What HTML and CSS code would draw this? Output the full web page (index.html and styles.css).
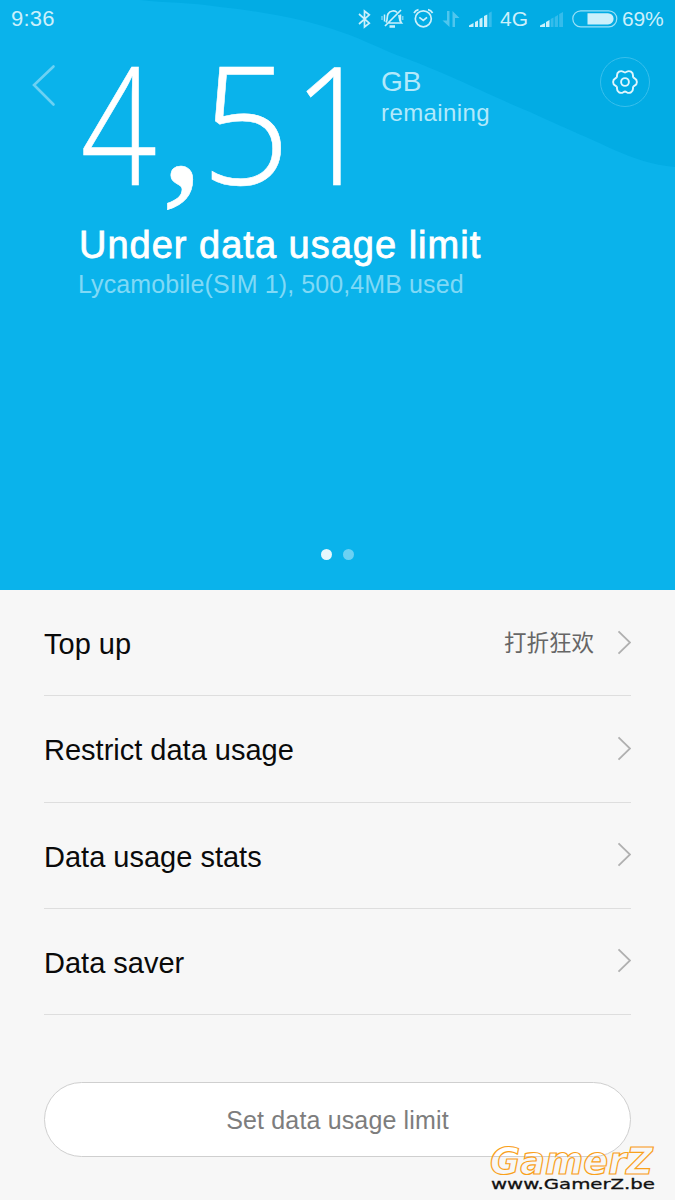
FILE: index.html
```html
<!DOCTYPE html>
<html lang="en">
  <head>
    <meta charset="UTF-8" />
    <meta name="viewport" content="width=device-width, initial-scale=1.0" />
    <title>Data usage</title>
    <link rel="stylesheet" href="styles.css">
  </head>
  <body>
    <header class="hero">
      <svg class="wave" width="675" height="170" viewBox="0 0 675 170">
        <path d="M140 0C165 3 190 2 220 7C260 11 308 20 341 32C365 40 382 50 405 58C460 79 495 98 530 112C575 133 592 139 612 149C635 159 652 165 675 167V0Z" />
      </svg>
      <div class="status">
        <time>9:36</time>
        <svg class="status-icons" width="146" height="30" viewBox="357 4 146 30">
          <g fill="none" stroke="#ccf0fb" stroke-width="1.7">
            <path d="M359 14L369.300 23.200L364.500 27V11L369.300 14.800L359 24" />
            <path d="M386 22.500C388 20 386.500 17 388 14C390 10.500 395 10 397 12.500M399 15C399.500 19 399 20 401.500 23H388M385 26L401 10" />
            <path d="M389.500 26.500H395" stroke-width="2.500" />
            <path d="M384.500 14.500V21.500M400.500 14.500V21.500" stroke-width="1.500" />
            <path d="M382 16V20M402.800 16V20" stroke-width="1.200" opacity=".7" />
            <circle cx="423.300" cy="18.800" r="8" />
            <path d="M419.300 17.300L423.300 20.500L427 17.300M414 13Q415.500 10.200 418.500 9.700M432.600 13Q431 10.200 428 9.700" />
          </g>
          <path d="M449.500 11V27L442.500 20.500H447V11ZM452.500 27V11L459.500 18H455V27Z" fill="#4fc6ee" />
          <path d="M469 27V25.500L473.500 23V27ZM475 27V22L478 20.500V27ZM479.500 27V19L482.500 17.500V27ZM484 27V16L487.300 14.500V27Z" fill="#ccf0fb" />
          <path d="M488.700 27V13L491.700 11.500V27Z" fill="#35bceb" />
        </svg>
        <span class="network">4G</span>
        <svg class="signal" width="24" height="17" viewBox="0 0 24 17">
          <path d="M0 16V14.500L5 12V16ZM6 16V11L9.500 9V16Z" fill="#ccf0fb" />
          <path d="M10.700 16V8L13.500 6.500V16ZM14.700 16V6L18 4V16ZM19.200 16V3L23 1V16Z" fill="#35bceb" />
        </svg>
        <svg class="battery" width="46" height="18" viewBox="0 0 46 18">
          <rect x=".8" y=".8" width="44" height="16" rx="8" fill="none" stroke="#99e0f7" stroke-width="1.200" />
          <path d="M15.500 3.200H36A5.600 5.600 0 0 1 36 14.400H15.500Z" fill="#ccf0fb" />
        </svg>
        <span class="percent">69%</span>
      </div>

      <div class="usage">
        <svg class="back" width="30" height="44" viewBox="0 0 30 44">
          <path d="M23.500 3.500L4 22L23.500 41.500" />
        </svg>
        <svg class="amount" width="300" height="165" viewBox="70 55 300 165">
          <text transform="translate(80.500 184.500) scale(.81 1)">4</text>
          <text class="comma" x="161" y="183">,</text>
          <text transform="translate(201 184) scale(.95 1)">5</text>
          <text transform="translate(293 184.500) scale(.86 1)">1</text>
        </svg>
        <div class="unit">
          <strong>GB</strong>
          <span>remaining</span>
        </div>
        <button class="settings" aria-label="Settings">
          <svg width="28" height="28" viewBox="-14 -14 28 28">
            <defs>
              <path id="lobe" d="M8.200 4.750C9.300 3.200 11.900 3.800 11.900 0C11.900 -3.800 9.300 -3.200 8.200 -4.750" />
            </defs>
            <use href="#lobe" />
            <use href="#lobe" transform="rotate(60)" />
            <use href="#lobe" transform="rotate(120)" />
            <use href="#lobe" transform="rotate(180)" />
            <use href="#lobe" transform="rotate(240)" />
            <use href="#lobe" transform="rotate(300)" />
            <circle r="3.900" />
          </svg>
        </button>
      </div>

      <h1>Under data usage limit</h1>
      <p class="sim">Lycamobile(SIM 1), 500,4MB used</p>
      <div class="dots"><i class="active"></i><i></i></div>
    </header>

    <main>
      <ul>
        <li>
          <span>Top up</span>
          <small>打折狂欢</small>
          <svg width="15" height="26" viewBox="0 0 15 26"><path d="M2.500 1.300L14 12.500L2.500 23.700" /></svg>
        </li>
        <li>
          <span>Restrict data usage</span>
          <svg width="15" height="26" viewBox="0 0 15 26"><path d="M2.500 1.300L14 12.500L2.500 23.700" /></svg>
        </li>
        <li>
          <span>Data usage stats</span>
          <svg width="15" height="26" viewBox="0 0 15 26"><path d="M2.500 1.300L14 12.500L2.500 23.700" /></svg>
        </li>
        <li>
          <span>Data saver</span>
          <svg width="15" height="26" viewBox="0 0 15 26"><path d="M2.500 1.300L14 12.500L2.500 23.700" /></svg>
        </li>
      </ul>
      <button class="limit">Set data usage limit</button>
    </main>

    <svg class="watermark" width="190" height="60" viewBox="485 1140 190 60">
      <text class="brand" x="490" y="1174" textLength="163" lengthAdjust="spacingAndGlyphs">GamerZ</text>
      <text class="site" x="491" y="1189" textLength="164" lengthAdjust="spacingAndGlyphs">www.GamerZ.be</text>
    </svg>
  </body>
</html>
```
FILE: styles.css
```css
* {
  box-sizing: border-box;
}
body {
  position: relative;
  width: 675px;
  height: 1200px;
  margin: 0;
  overflow: hidden;
  background: #f7f7f7;
  font-family: "Liberation Sans", "Noto Sans CJK SC", sans-serif;
}
svg {
  display: block;
  flex-shrink: 0;
}
button {
  font-family: inherit;
  padding: 0;
}
.hero {
  position: relative;
  height: 590px;
  background: #0ab3eb;
  color: #fff;
}
.wave {
  position: absolute;
  top: 0;
  left: 0;
  fill: #02ace4;
}
.status {
  position: relative;
  display: flex;
  align-items: center;
  height: 38px;
  padding: 0 11px;
  color: #ccf0fb;
  font-size: 21px;
  time {
    font-size: 22px;
    letter-spacing: 0.2px;
  }
}
.status-icons {
  margin-left: auto;
}
.network {
  margin-left: -3px;
  width: 30px;
}
.signal {
  margin: 0 8px 0 10px;
}
.battery {
  margin-right: 4px;
}
.percent {
  width: 42px;
  letter-spacing: -0.2px;
}
.usage {
  position: relative;
  display: flex;
  align-items: flex-start;
  height: 182px;
  padding: 17px 25px 0 30px;
}
.back {
  margin: 8px 10px 0 0;
  fill: none;
  stroke: #6cd1f3;
  stroke-width: 2.6;
  stroke-linecap: round;
}
.amount {
  overflow: visible;
  fill: #fff;
  stroke: #fff;
  stroke-width: 0.6;
  font-family: "Open Sans", sans-serif;
  font-weight: 300;
  font-size: 165px;
}
.comma {
  font-family: "Liberation Serif", serif;
  font-weight: 400;
  font-size: 170px;
}
.unit {
  display: flex;
  flex-direction: column;
  margin: 10px 0 0 11px;
  color: #b3e9fb;
  strong {
    font-size: 28px;
    font-weight: 400;
    line-height: 34px;
  }
  span {
    font-size: 24px;
    line-height: 28px;
    letter-spacing: 0.4px;
  }
}
.settings {
  display: grid;
  place-content: center;
  width: 50px;
  height: 50px;
  margin: 2px 0 0 auto;
  background: none;
  border: 1px solid #38bfec;
  border-radius: 50%;
  svg {
    fill: none;
    stroke: #e0f6fd;
    stroke-width: 1.9;
  }
}
h1 {
  margin: 3px 0 0 79px;
  font-size: 38px;
  font-weight: 400;
  line-height: 44px;
  letter-spacing: 1px;
  -webkit-text-stroke: 0.8px #fff;
}
.sim {
  margin: 2px 0 0 78px;
  color: #80d9f6;
  font-size: 25px;
  line-height: 30px;
  letter-spacing: 0.1px;
}
.dots {
  display: flex;
  justify-content: center;
  gap: 11px;
  margin-top: 250px;
  i {
    width: 11px;
    height: 11px;
    border-radius: 50%;
    background: #6cd1f3;
  }
  .active {
    background: #e6f8fd;
  }
}
main {
  padding: 0 44px;
}
ul {
  list-style: none;
  margin: 0;
  padding: 0;
}
li {
  display: flex;
  align-items: center;
  height: 106.25px;
  border-bottom: 1px solid #dedede;
  color: #0a0a0a;
  font-size: 29px;
  span {
    flex-grow: 1;
    padding-top: 4px;
  }
  small {
    margin: 0 22px 3px 0;
    color: #666;
    font-size: 22.500px;
  }
  svg {
    fill: none;
    stroke: #b0b0b0;
    stroke-width: 1.8;
  }
}
.limit {
  display: block;
  width: 587px;
  height: 75px;
  margin-top: 67px;
  padding-top: 2px;
  background: #fff;
  border: 1px solid #cfcfcf;
  border-radius: 38px;
  color: #7d7d7d;
  font-size: 25px;
  letter-spacing: 0.15px;
}
.watermark {
  position: absolute;
  left: 485px;
  top: 1140px;
  font-family: "DejaVu Sans", sans-serif;
}
.brand {
  fill: none;
  stroke: #f9a11b;
  stroke-width: 1.2;
  font-size: 37px;
  font-weight: 700;
  font-style: italic;
}
.site {
  fill: #111;
  stroke: #111;
  stroke-width: 0.3;
  font-size: 14px;
}
```
